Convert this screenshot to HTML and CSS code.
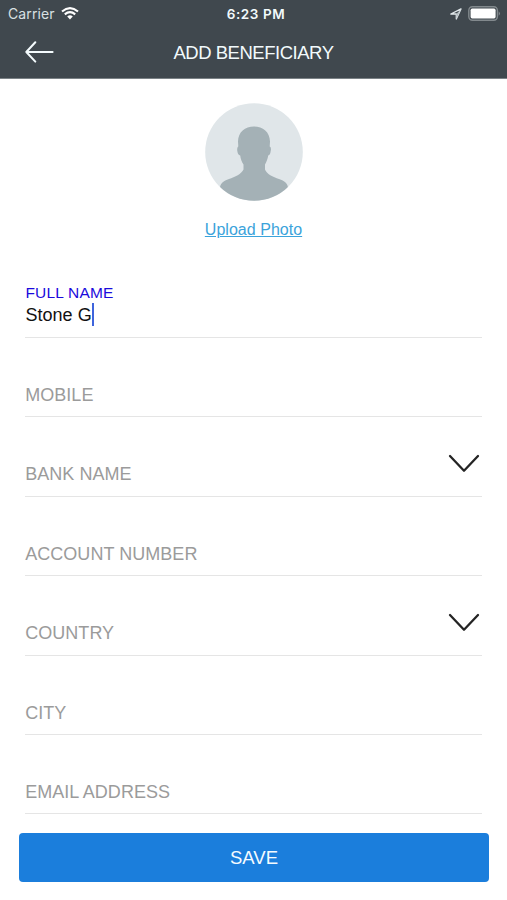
FILE: index.html
```html
<!DOCTYPE html>
<html lang="en">
<head>
<meta charset="utf-8">
<title>Add Beneficiary</title>
<link rel="stylesheet" href="styles.css">
</head>
<body>
<header class="header">
  <div class="status">
    <div class="status-left">
      <span class="carrier">Carrier</span>
      <svg class="wifi" width="18" height="13" viewBox="0 0 18 13" fill="none" stroke="#fff" stroke-width="2.1"><path d="M1 4.5Q9-2.3 17 4.5M3.8 7.4Q9 3 14.2 7.4"/><path d="M6.2 9.5Q9 7.2 11.8 9.5L9 12.4Z" fill="#fff" stroke="none"/></svg>
    </div>
    <span class="time">6:23 PM</span>
    <div class="status-right">
      <svg width="12" height="12" viewBox="0 0 12 12" fill="none" stroke="#e2e9ec" stroke-width="1.3" stroke-linejoin="round"><path d="M.8 6L11 .9L6.3 11V6Z"/><path d="M6.3 6L11 .9L6.3 11Z" fill="#b5bec2" stroke="none"/></svg>
      <svg width="33" height="15" viewBox="0 0 33 15"><rect x=".8" y=".8" width="28.6" height="13.4" rx="3.6" fill="none" stroke="#82898d" stroke-width="1.4"/><rect x="2.6" y="2.6" width="25" height="9.8" rx="1.6" fill="#fff"/><path d="M30.7 5.2Q33.2 7.5 30.7 9.8Z" fill="#82898d"/></svg>
    </div>
  </div>
  <div class="nav">
    <svg class="back" width="29" height="22" viewBox="0 0 29 22" fill="none" stroke="#f4fbfd" stroke-width="2" stroke-linecap="round" stroke-linejoin="round"><path d="M10.3 1.2L1.3 11L10.3 20.6M1.3 11H27.6"/></svg>
    <h1 class="title">ADD BENEFICIARY</h1>
  </div>
</header>
<main>
  <section class="photo">
    <svg width="98" height="98" viewBox="0 0 98 98"><defs><clipPath id="disc"><circle cx="49" cy="49" r="48.8"/></clipPath></defs><circle cx="49" cy="49" r="48.8" fill="#e0e6e9"/><path clip-path="url(#disc)" fill="#a4b1b6" d="M49 23.5C58 23.5 64.8 29 65 38.5L64.7 43.5Q66.5 44.2 65.7 48C65.3 51 64.6 52.2 63.2 52.4C62.8 56 61.2 59 60 61.5V66.5C61.5 71 68 74 74 76C79.5 78 83 80.5 83 85V98H15V85C15 80.5 18.5 78 24 76C30 74 36.5 71 38.5 66.5V61.5C37 59 35.5 56 35.2 52.4C33.6 52.2 32.8 51 32.3 48C31.7 44.2 33.3 43.5 33.3 43.5L33 38.5C33.2 29 40 23.5 49 23.5Z"/></svg>
    <a class="upload">Upload Photo</a>
  </section>
  <form class="form">
    <div class="field active"><span class="caption">FULL NAME</span><span class="value">Stone G<i class="caret"></i></span></div>
    <div class="field"><span class="label">MOBILE</span></div>
    <div class="field"><span class="label">BANK NAME</span><svg class="chevron" width="32" height="20" viewBox="0 0 32 20"><path d="M2 2L16 16.7L30 2"/></svg></div>
    <div class="field"><span class="label">ACCOUNT NUMBER</span></div>
    <div class="field"><span class="label">COUNTRY</span><svg class="chevron" width="32" height="20" viewBox="0 0 32 20"><path d="M2 2L16 16.7L30 2"/></svg></div>
    <div class="field"><span class="label">CITY</span></div>
    <div class="field"><span class="label">EMAIL ADDRESS</span></div>
  </form>
  <button class="save">SAVE</button>
</main>
</body>
</html>
```
FILE: styles.css
```css
* { box-sizing: border-box; }
body { margin: 0; height: 900px; overflow: hidden; background: #fff; font-family: "Liberation Sans", Arial, sans-serif; }
.header { height: 79px; background: #40484e; border-bottom: 1px solid #7b8286; color: #f2fafc; }
.status { display: grid; grid-template-columns: 1fr auto 1fr; height: 27px; align-items: center; padding: 0 6px 0 8px; font: 14px/27px Inter, sans-serif; }
.status-left { display: flex; align-items: center; gap: 6px; }
.carrier { color: #d9e0e3; letter-spacing: .1px; }
.time { font-weight: 600; font-size: 13.5px; line-height: 25px; letter-spacing: .55px; padding-left: 3px; padding-top: 2px; }
.status-right { display: flex; align-items: center; justify-content: flex-end; gap: 6px; }
.nav { display: grid; grid-template-columns: 54px 1fr 54px; align-items: center; height: 51px; }
.back { margin-left: 25px; margin-top: -1px; }
.title { margin: 0; font-weight: 400; font-size: 18.5px; line-height: 50px; letter-spacing: -.48px; text-align: center; }
.photo { display: flex; flex-direction: column; align-items: center; padding-top: 24px; height: 179px; }
.upload { margin-top: 19px; font-size: 16px; line-height: 20px; color: #3ba3db; text-decoration: underline; text-underline-offset: 1px; text-decoration-thickness: 1px; letter-spacing: .03px; }
.form { margin: 0 25px; }
.field { display: flex; justify-content: space-between; height: 79.4px; border-bottom: 1px solid #e5e5e5; color: #9b9b9b; }
.label { margin-top: 46px; padding-left: .2px; font-size: 18px; line-height: 22px; letter-spacing: .04px; }
.active { flex-direction: column; justify-content: flex-start; padding-top: 25px; height: 80px; }
.caption { padding-left: .4px; font-size: 15.5px; line-height: 20px; letter-spacing: .2px; color: #1b0bdc; }
.value { display: flex; padding-top: 1px; padding-left: .4px; font-size: 18px; line-height: 23px; letter-spacing: .05px; color: #111; }
.caret { width: 2px; height: 23px; margin-top: -1px; background: #3e64dc; }
.chevron { margin: 37px 2px 0 0; fill: none; stroke: #242424; stroke-width: 2.3; stroke-linecap: round; stroke-linejoin: round; }
.save { display: block; width: 470px; height: 49px; margin: 18.5px 0 0 19px; padding: 0; border: 0; border-radius: 4px; background: #1b7edc; color: #f4fbff; font: 18.5px/49px "Liberation Sans", Arial, sans-serif; }
```
